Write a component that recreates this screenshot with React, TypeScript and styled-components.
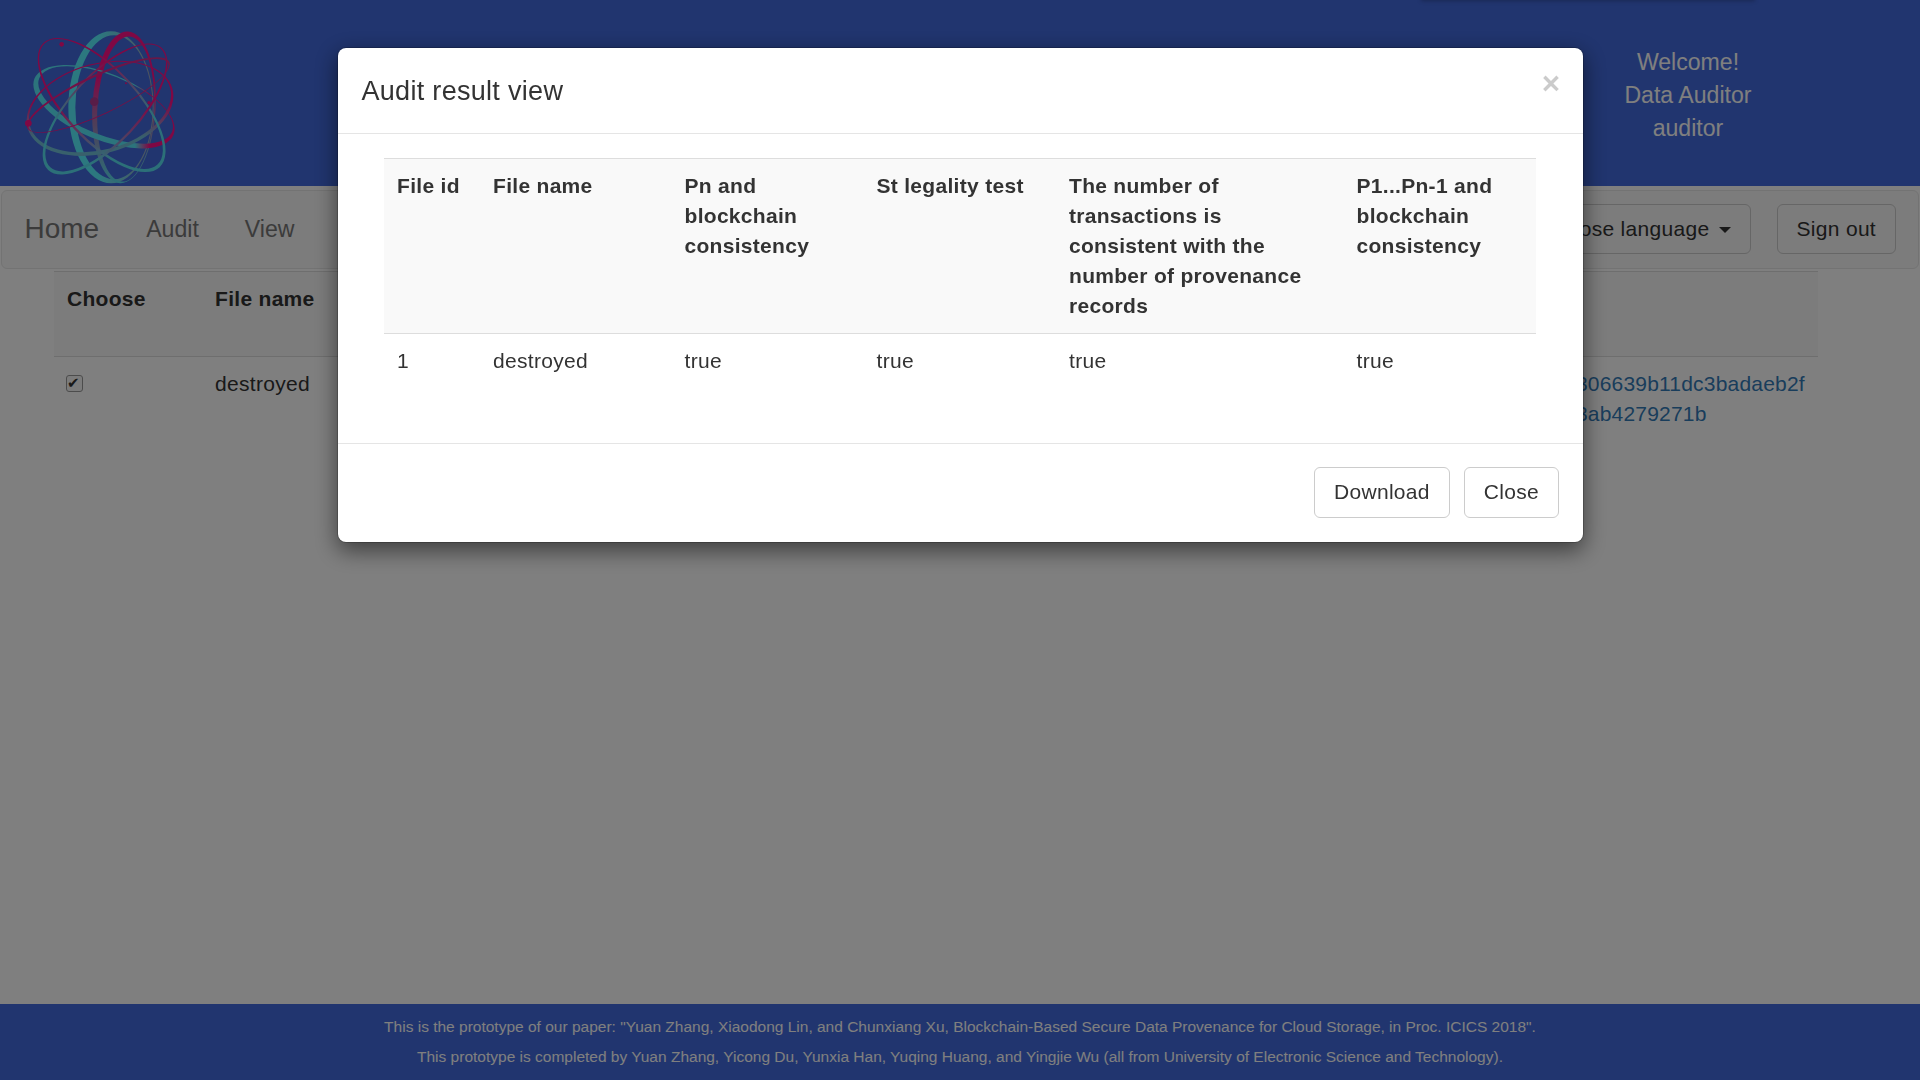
import React from "react";
import styled, { createGlobalStyle } from "styled-components";

const Global = createGlobalStyle`
  html, body { margin: 0; padding: 0; background: #fff; }
  body { font-family: "Liberation Sans", Arial, sans-serif; font-size: 21px; line-height: 30px; letter-spacing: 0.3px; color: #333; overflow: hidden; }
  * { box-sizing: border-box; }
`;

const Page = styled.div`
  min-height: 100vh;
  display: flex;
  flex-direction: column;
`;
const Header = styled.header`
  position: relative;
  height: 186px;
  background: #426ade;
  display: flex;
  justify-content: space-between;
  align-items: flex-start;
  padding: 30px 132px 0 24px;
`;
const TopPeek = styled.div`
  position: absolute;
  top: -20px;
  left: 1421px;
  width: 334px;
  height: 20px;
  box-shadow: 0 1px 4px rgba(0, 0, 0, 0.25);
`;
const LogoMark = styled.svg`
  width: 156px;
  height: 156px;
  display: block;
`;
const Welcome = styled.div`
  color: #fff;
  font-size: 23.1px;
  line-height: 33px;
  letter-spacing: 0;
  text-align: center;
  padding-top: 16px;
  width: 200px;
`;
const Navbar = styled.nav`
  margin: 4px 1px 0;
  height: 79px;
  background: #f8f8f8;
  border: 1.5px solid #e7e7e7;
  border-radius: 6px;
  display: flex;
  align-items: center;
  padding: 0 22px 2px 22.5px;
`;
const Brand = styled.a`
  font-size: 28px;
  letter-spacing: 0;
  color: #777;
  margin-right: 47px;
`;
const NavLink = styled.a`
  font-size: 23.1px;
  letter-spacing: 0;
  color: #777;
  margin-right: 46px;
`;
const NavRight = styled.div`
  margin-left: auto;
  display: flex;
  gap: 26px;
`;
const NavButton = styled.button`
  font: inherit;
  letter-spacing: inherit;
  height: 50px;
  margin-top: 1px;
  padding: 0 19px;
  color: #333;
  background: transparent;
  border: 1.5px solid #ccc;
  border-radius: 6px;
`;
const Caret = styled.span`
  display: inline-block;
  margin-left: 3px;
  vertical-align: middle;
  border-top: 6px solid #333;
  border-left: 6px solid transparent;
  border-right: 6px solid transparent;
`;
const Main = styled.main`
  flex: 1;
  padding: 2px 102px 0 54px;
`;
const DataTable = styled.table`
  width: 100%;
  table-layout: fixed;
  border-collapse: collapse;
  border-top: 1.5px solid #ddd;
`;
const HeadCell = styled.th`
  text-align: left;
  vertical-align: top;
  padding: 12px 12px 12px 13px;
  background: #f9f9f9;
  border-bottom: 1.5px solid #ddd;
  font-weight: 700;
`;
const BodyCell = styled.td`
  vertical-align: top;
  padding: 12px 12px 12px 13px;
`;
const HashLink = styled.a`
  color: #337ab7;
  letter-spacing: 0.2px;
  word-break: break-all;
`;
const Check = styled.input`
  appearance: none;
  width: 17px;
  height: 17px;
  margin: 6px 0 0 -1px;
  display: block;
  position: relative;
  background: #f6f6f6;
  border: 1.5px solid #999;
  border-radius: 3px;
  &:checked::before {
    content: "✔";
    position: absolute;
    left: 0;
    top: 0;
    font: 15px/14px "DejaVu Sans", sans-serif;
    letter-spacing: 0;
    color: #333;
  }
`;
const Footer = styled.footer`
  height: 76px;
  background: #426ade;
  color: #fff;
  font-size: 15.5px;
  line-height: 30px;
  letter-spacing: 0;
  text-align: center;
  padding-top: 8px;
`;
const Backdrop = styled.div`
  position: fixed;
  inset: 0;
  background: rgba(0, 0, 0, 0.5);
`;
const Modal = styled.div`
  position: fixed;
  left: 337px;
  top: 47px;
  width: 1247px;
  background: #fff;
  background-clip: padding-box;
  border: 1.5px solid rgba(0, 0, 0, 0.2);
  border-radius: 9px;
  box-shadow: 0 7.5px 22.5px rgba(0, 0, 0, 0.5);
`;
const ModalHeader = styled.div`
  height: 85.5px;
  padding: 23.5px 22.5px 22.5px 23.5px;
  border-bottom: 1.5px solid #e5e5e5;
  display: flex;
  justify-content: space-between;
  align-items: flex-start;
`;
const ModalTitle = styled.h4`
  margin: 0;
  font-size: 27px;
  line-height: 39px;
  font-weight: 400;
  color: #333;
`;
const CloseX = styled.span`
  font-size: 31.5px;
  line-height: 31.5px;
  font-weight: 700;
  color: #000;
  opacity: 0.2;
  margin-top: -4px;
`;
const ModalBody = styled.div`
  padding: 24px 46px 55.5px;
`;
const ResultTable = styled.table`
  width: 1152px;
  table-layout: fixed;
  border-collapse: collapse;
  border-top: 1.5px solid #ddd;
`;
const ModalFooter = styled.div`
  border-top: 1.5px solid #e5e5e5;
  padding: 22.5px 24px 24.5px 22.5px;
  display: flex;
  justify-content: flex-end;
  gap: 14px;
`;
const ModalButton = styled.button`
  font: inherit;
  letter-spacing: inherit;
  height: 51px;
  padding: 0 19px;
  color: #333;
  background: #fff;
  border: 1.5px solid #ccc;
  border-radius: 6px;
`;

type Ring = { cx: number; cy: number; rx: number; ry: number; rot: number; w: number; tx: number; ty: number; fill: string };

const rings: Ring[] = [
  { cx: 333, cy: 322, rx: 128, ry: 228, rot: 0, w: 3, tx: 9, ty: 0, fill: "url(#logoA)" },
  { cx: 372, cy: 322, rx: 95, ry: 228, rot: 3, w: 3, tx: 5, ty: 5, fill: "url(#logoB)" },
  { cx: 312, cy: 320, rx: 225, ry: 100, rot: 22, w: 3, tx: 5, ty: -5, fill: "url(#logoC)" },
  { cx: 300, cy: 325, rx: 225, ry: 135, rot: -15, w: 3, tx: 0, ty: -4, fill: "url(#logoD)" },
  { cx: 305, cy: 315, rx: 255, ry: 110, rot: 47, w: 3, tx: -2, ty: -3, fill: "url(#logoE)" },
  { cx: 315, cy: 327, rx: 250, ry: 105, rot: -47, w: 3, tx: 2, ty: -3, fill: "url(#logoF)" },
  { cx: 295, cy: 285, rx: 235, ry: 60, rot: -25, w: 2.5, tx: 0, ty: 2, fill: "url(#logoG)" },
];

const ellipsePath = (cx: number, cy: number, rx: number, ry: number, rot: number) => {
  const a = (rot * Math.PI) / 180;
  const dx = rx * Math.cos(a);
  const dy = rx * Math.sin(a);
  return `M${cx - dx} ${cy - dy}A${rx} ${ry} ${rot} 1 0 ${cx + dx} ${cy + dy}A${rx} ${ry} ${rot} 1 0 ${cx - dx} ${cy - dy}Z`;
};
const ringPath = (r: Ring) => {
  const t = Math.hypot(r.tx, r.ty);
  const s = r.w + t;
  return ellipsePath(r.cx, r.cy, r.rx, r.ry, r.rot) + ellipsePath(r.cx + r.tx, r.cy + r.ty, r.rx - s, r.ry - s, r.rot);
};

const Logo = () => (
  <LogoMark viewBox="72 90 468 468" fill="none">
    <defs>
      <linearGradient id="logoA" x1="0" y1="0" x2="1" y2="0">
        <stop offset="0.35" stopColor="#58f0ff" />
        <stop offset="1" stopColor="#a0a0b8" />
      </linearGradient>
      <linearGradient id="logoB" x1="0" y1="0" x2="0" y2="1">
        <stop offset="0.3" stopColor="#ff1088" />
        <stop offset="0.6" stopColor="#a07ab0" />
        <stop offset="1" stopColor="#58e0f0" />
      </linearGradient>
      <linearGradient id="logoC" x1="0" y1="0" x2="1" y2="0">
        <stop offset="0.5" stopColor="#58e8f8" />
        <stop offset="0.72" stopColor="#58e8f8" />
        <stop offset="0.82" stopColor="#ff1088" />
      </linearGradient>
      <linearGradient id="logoD" x1="0" y1="0" x2="0" y2="1">
        <stop offset="0.45" stopColor="#ff1088" />
        <stop offset="0.8" stopColor="#70c0d8" />
      </linearGradient>
      <linearGradient id="logoE" x1="0" y1="0" x2="1" y2="1">
        <stop offset="0.3" stopColor="#ff1088" />
        <stop offset="0.75" stopColor="#58e0f0" />
      </linearGradient>
      <linearGradient id="logoF" x1="1" y1="0" x2="0" y2="1">
        <stop offset="0.3" stopColor="#ff1088" />
        <stop offset="0.75" stopColor="#58e0f0" />
      </linearGradient>
      <linearGradient id="logoG" x1="0" y1="1" x2="1" y2="0">
        <stop offset="0" stopColor="#ff1088" />
        <stop offset="1" stopColor="#d03090" />
      </linearGradient>
    </defs>
    {rings.map((r, i) => (
      <path key={i} d={ringPath(r)} fill={r.fill} fillRule="evenodd" />
    ))}
    <circle cx="283" cy="305" r="13" fill="#b03a90" />
    <circle cx="185" cy="133" r="7" fill="#ff1088" />
    <circle cx="85" cy="370" r="10" fill="#ff1088" />
    <circle cx="447" cy="308" r="5" fill="#ff1088" />
    <circle cx="378" cy="250" r="3" fill="#ff1088" />
  </LogoMark>
);

const resultHeads = [
  ["File id", 96],
  ["File name", 191.5],
  ["Pn and blockchain consistency", 192],
  ["St legality test", 192.5],
  ["The number of transactions is consistent with the number of provenance records", 287.5],
  ["P1...Pn-1 and blockchain consistency", 192.5],
] as const;
const resultRow = ["1", "destroyed", "true", "true", "true", "true"];

const pageHeads = [
  ["Choose", 148],
  ["File name", 400],
  ["Owner", 300],
  ["Create time", 482.7],
] as const;

export default function App() {
  return (
    <>
      <Global />
      <Page>
        <Header>
          <TopPeek />
          <Logo />
          <Welcome>
            <div>Welcome!</div>
            <div>Data Auditor</div>
            <div>auditor</div>
          </Welcome>
        </Header>
        <Navbar>
          <Brand>Home</Brand>
          <NavLink>Audit</NavLink>
          <NavLink>View</NavLink>
          <NavRight>
            <NavButton>Choose language <Caret /></NavButton>
            <NavButton>Sign out</NavButton>
          </NavRight>
        </Navbar>
        <Main>
          <DataTable>
            <colgroup>
              {pageHeads.map(([, w]) => <col key={w} width={w} />)}
              <col width={433.3} />
            </colgroup>
            <thead>
              <tr>
                {pageHeads.map(([h]) => <HeadCell key={h}>{h}</HeadCell>)}
                <HeadCell>Provenance<br />record hash</HeadCell>
              </tr>
            </thead>
            <tbody>
              <tr>
                <BodyCell><Check type="checkbox" defaultChecked /></BodyCell>
                <BodyCell>destroyed</BodyCell>
                <BodyCell>auditor</BodyCell>
                <BodyCell>2018-06-12</BodyCell>
                <BodyCell>
                  <HashLink>412753809264175306639b11dc3badaeb2f1827364509182733ab4279271b</HashLink>
                </BodyCell>
              </tr>
            </tbody>
          </DataTable>
        </Main>
        <Footer>
          <div>This is the prototype of our paper: "Yuan Zhang, Xiaodong Lin, and Chunxiang Xu, Blockchain-Based Secure Data Provenance for Cloud Storage, in Proc. ICICS 2018".</div>
          <div>This prototype is completed by Yuan Zhang, Yicong Du, Yunxia Han, Yuqing Huang, and Yingjie Wu (all from University of Electronic Science and Technology).</div>
        </Footer>
      </Page>
      <Backdrop />
      <Modal>
        <ModalHeader>
          <ModalTitle>Audit result view</ModalTitle>
          <CloseX>×</CloseX>
        </ModalHeader>
        <ModalBody>
          <ResultTable>
            <colgroup>
              {resultHeads.map(([h, w]) => <col key={h} width={w} />)}
            </colgroup>
            <thead>
              <tr>
                {resultHeads.map(([h]) => <HeadCell key={h}>{h}</HeadCell>)}
              </tr>
            </thead>
            <tbody>
              <tr>
                {resultRow.map((v, i) => <BodyCell key={i}>{v}</BodyCell>)}
              </tr>
            </tbody>
          </ResultTable>
        </ModalBody>
        <ModalFooter>
          <ModalButton>Download</ModalButton>
          <ModalButton>Close</ModalButton>
        </ModalFooter>
      </Modal>
    </>
  );
}
